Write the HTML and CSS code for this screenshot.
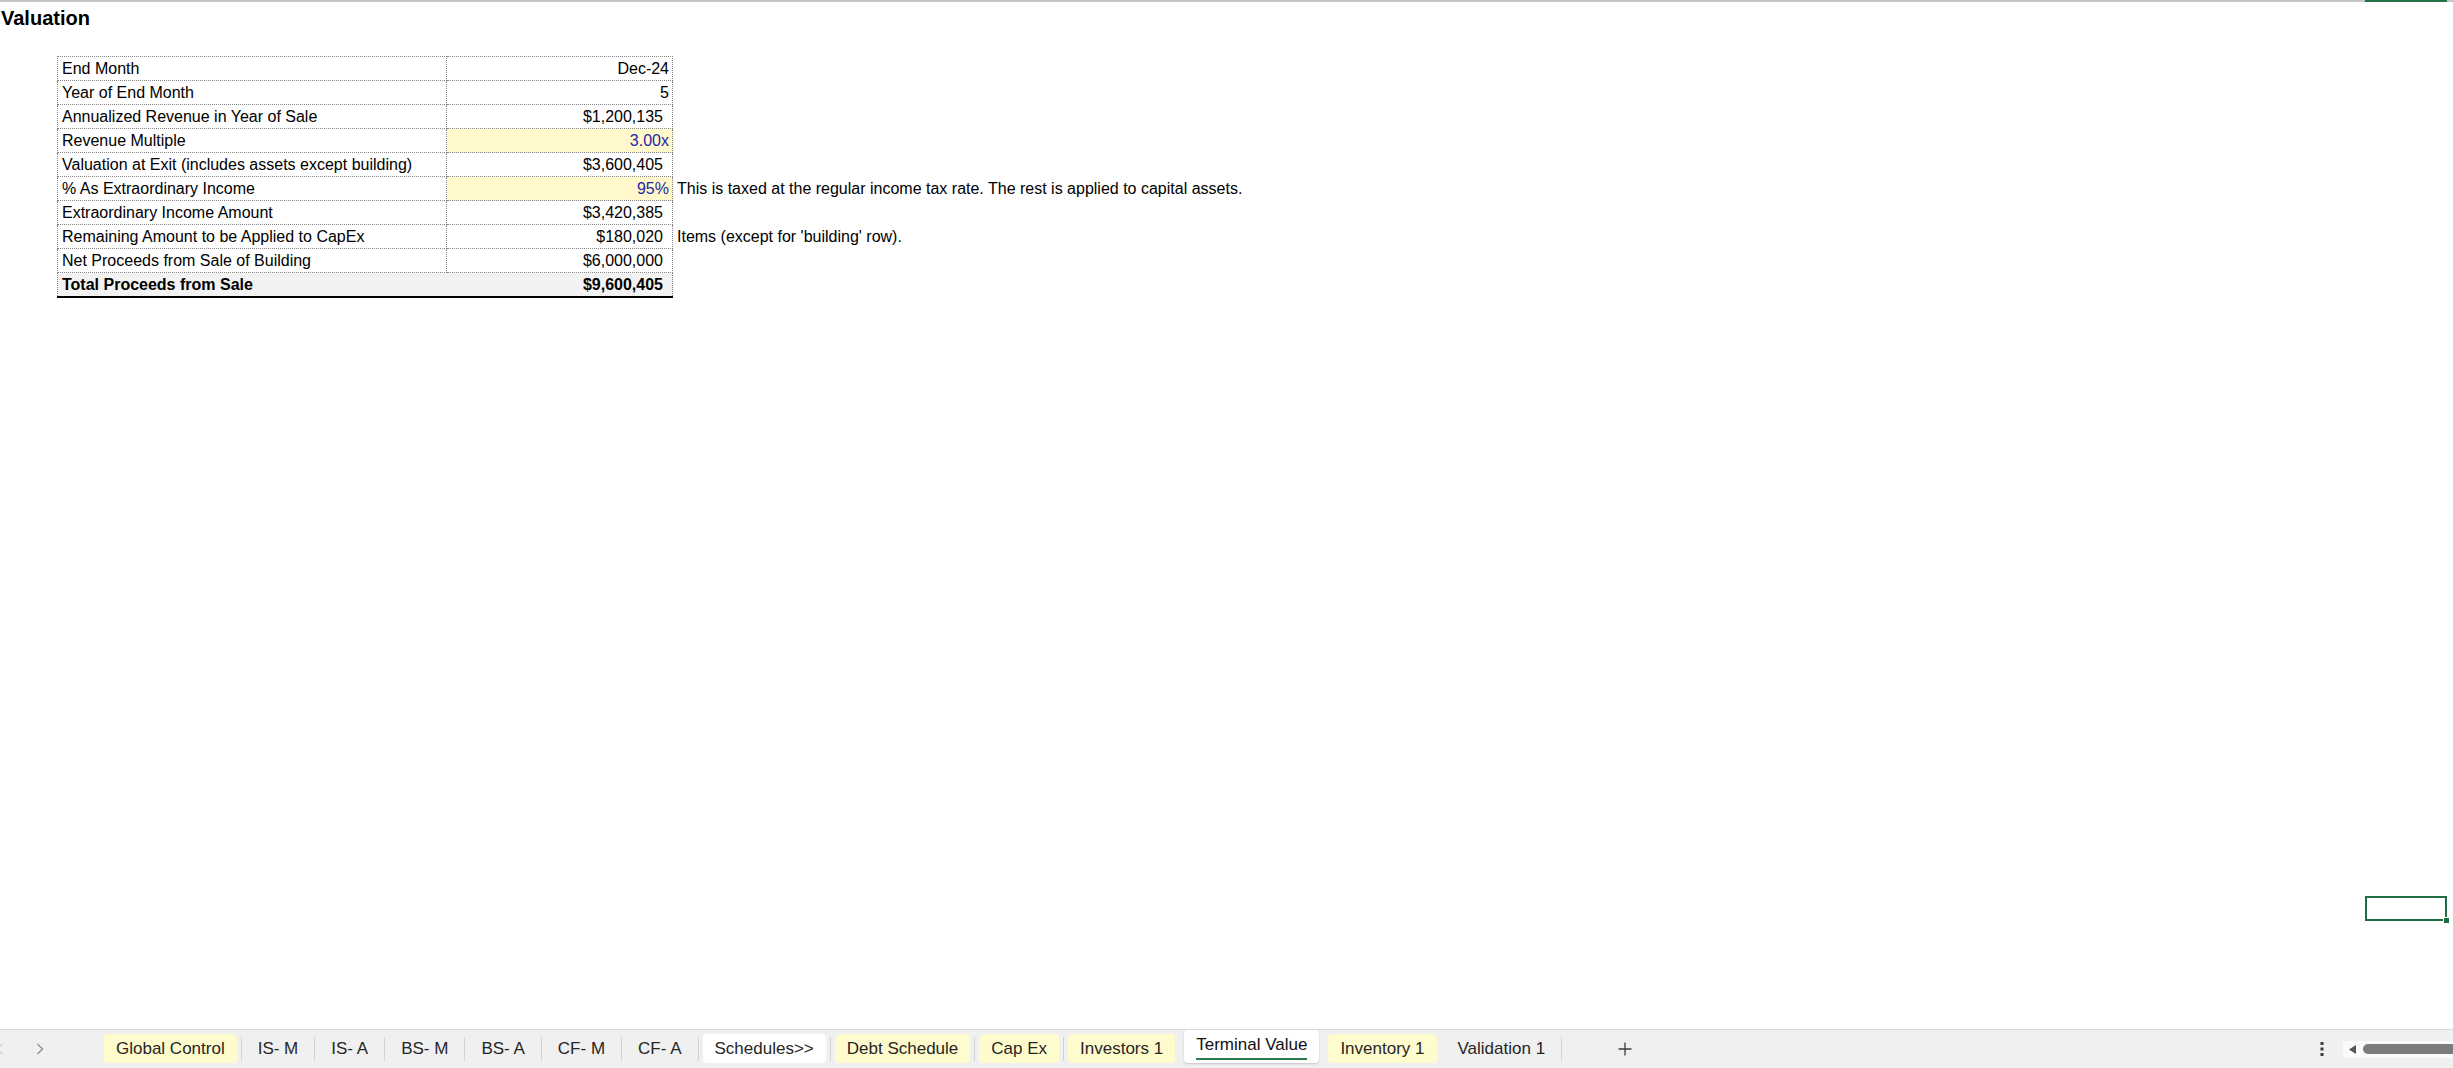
FILE: index.html
```html
<!DOCTYPE html>
<html lang="en">
<head>
    <meta charset="UTF-8">
    <meta name="viewport" content="width=device-width, initial-scale=1.0">
    <title>Terminal Value</title>
    <link rel="stylesheet" href="styles.css">
</head>
<body>
    <div class="sheet">
        <div class="col-marker"></div>
        <h1 class="title">Valuation</h1>
        <table class="valuation">
            <tr>
                <td class="label">End Month</td>
                <td class="value">Dec-24</td>
                <td class="note"></td>
            </tr>
            <tr>
                <td class="label">Year of End Month</td>
                <td class="value">5</td>
                <td class="note"></td>
            </tr>
            <tr>
                <td class="label">Annualized Revenue in Year of Sale</td>
                <td class="value acct">$1,200,135</td>
                <td class="note"></td>
            </tr>
            <tr>
                <td class="label">Revenue Multiple</td>
                <td class="value input">3.00x</td>
                <td class="note"></td>
            </tr>
            <tr>
                <td class="label">Valuation at Exit (includes assets except building)</td>
                <td class="value acct">$3,600,405</td>
                <td class="note"></td>
            </tr>
            <tr>
                <td class="label">% As Extraordinary Income</td>
                <td class="value input">95%</td>
                <td class="note">This is taxed at the regular income tax rate. The rest is applied to capital assets.</td>
            </tr>
            <tr>
                <td class="label">Extraordinary Income Amount</td>
                <td class="value acct">$3,420,385</td>
                <td class="note"></td>
            </tr>
            <tr>
                <td class="label">Remaining Amount to be Applied to CapEx</td>
                <td class="value acct">$180,020</td>
                <td class="note">Items (except for 'building' row).</td>
            </tr>
            <tr>
                <td class="label">Net Proceeds from Sale of Building</td>
                <td class="value acct">$6,000,000</td>
                <td class="note"></td>
            </tr>
            <tr class="total">
                <td class="label">Total Proceeds from Sale</td>
                <td class="value acct">$9,600,405</td>
                <td class="note"></td>
            </tr>
        </table>
        <div class="active-cell"><span class="fill-handle"></span></div>
    </div>

    <div class="tabbar">
        <div class="tab-nav">
            <svg class="chev chev-off" viewBox="0 0 8 12"><polyline points="6.5,1 1.5,6 6.5,11"/></svg>
            <svg class="chev" viewBox="0 0 8 12"><polyline points="1.5,1 6.5,6 1.5,11"/></svg>
        </div>
        <div class="tabs">
            <div class="tab tab-input">Global Control</div>
            <span class="tab-sep"></span>
            <div class="tab">IS- M</div>
            <span class="tab-sep"></span>
            <div class="tab">IS- A</div>
            <span class="tab-sep"></span>
            <div class="tab">BS- M</div>
            <span class="tab-sep"></span>
            <div class="tab">BS- A</div>
            <span class="tab-sep"></span>
            <div class="tab">CF- M</div>
            <span class="tab-sep"></span>
            <div class="tab">CF- A</div>
            <span class="tab-sep"></span>
            <div class="tab tab-white">Schedules&gt;&gt;</div>
            <span class="tab-sep"></span>
            <div class="tab tab-input">Debt Schedule</div>
            <span class="tab-sep"></span>
            <div class="tab tab-input">Cap Ex</div>
            <span class="tab-sep"></span>
            <div class="tab tab-input">Investors 1</div>
            <span class="tab-sep off"></span>
            <div class="tab tab-active"><span>Terminal Value</span></div>
            <span class="tab-sep off"></span>
            <div class="tab tab-input">Inventory 1</div>
            <span class="tab-sep off"></span>
            <div class="tab">Validation 1</div>
            <span class="tab-sep"></span>
        </div>
        <svg class="tab-add" viewBox="0 0 14 14"><path d="M7 0.5V13.5M0.5 7H13.5"/></svg>
        <div class="tab-tools">
            <svg class="more-dots" viewBox="0 0 4 16"><rect x="0.5" y="1" width="3" height="3"/><rect x="0.5" y="6.5" width="3" height="3"/><rect x="0.5" y="12" width="3" height="3"/></svg>
            <div class="hscroll">
                <svg class="hscroll-arrow" viewBox="0 0 7 9"><polygon points="7,0 7,9 0,4.5"/></svg>
                <div class="hscroll-thumb"></div>
            </div>
        </div>
    </div>
</body>
</html>
```

FILE: styles.css
```css
body {
    margin: 0;
    overflow: hidden;
    background: #fff;
    color: #000;
    font-family: "Liberation Sans", Arial, sans-serif;
}
.sheet {
    position: relative;
    height: 1029px;
    box-sizing: border-box;
    border-top: 2px solid #c6c6c6;
}
.col-marker {
    position: absolute;
    left: 2365px;
    top: -2px;
    width: 82px;
    height: 2px;
    background: #217346;
}
.title {
    margin: 0;
    padding: 4px 0 0 1px;
    font-size: 20px;
    line-height: 24px;
    font-weight: bold;
}
.valuation {
    margin: 26px 0 0 57px;
    border-collapse: collapse;
    font-size: 16px;
}
.valuation td {
    height: 23px;
    padding: 0 4px;
    line-height: 23px;
    white-space: nowrap;
}
.label, .value {
    border: 1px dotted #858585;
}
.label {
    width: 380px;
}
.value {
    width: 218px;
    text-align: right;
    padding-right: 3px !important;
}
.value.acct {
    width: 212px;
    padding-right: 9px !important;
}
.value.input {
    background: #fff9cc;
    color: #2626a8;
}
.note {
    padding-left: 4px;
}
.total .label, .total .value {
    background: #f2f2f2;
    font-weight: bold;
    border-bottom: 2px solid #000;
}
.total .label {
    border-right-style: hidden;
}
.active-cell {
    position: absolute;
    left: 2365px;
    top: 894px;
    width: 82px;
    height: 25px;
    box-sizing: border-box;
    border: 2px solid #1f6e43;
}
.fill-handle {
    position: absolute;
    right: -5px;
    bottom: -5px;
    width: 5px;
    height: 5px;
    background: #1f6e43;
    border: 1px solid #fff;
}

.tabbar {
    height: 39px;
    box-sizing: border-box;
    border-top: 1px solid #dadada;
    background: #f0f0f0;
    display: flex;
    align-items: center;
    font-size: 17px;
    color: #262626;
}
.tab-nav {
    width: 100px;
    flex: none;
    display: flex;
    align-items: center;
}
.chev {
    width: 8px;
    height: 12px;
    fill: none;
    stroke: #8c8c8c;
    stroke-width: 1.3;
}
.chev-off {
    margin-left: -4px;
    margin-right: 32px;
    stroke: #cdcdcd;
}
.tabs {
    display: flex;
    align-items: center;
    height: 100%;
}
.tab {
    align-self: flex-end;
    margin: 0 4px 5px;
    padding: 0 12px;
    height: 29px;
    line-height: 29px;
    border-radius: 4px;
    white-space: nowrap;
}
.tab-input {
    background: #fefbcd;
}
.tab-white {
    background: #fff;
}
.tab-active {
    height: 33px;
    line-height: normal;
    background: #fff;
    color: #111;
    box-shadow: 0 1px 2px rgba(0, 0, 0, 0.18);
}
.tab-active span {
    display: block;
    margin-top: 2px;
    height: 26px;
    line-height: 26px;
    border-bottom: 2px solid #2b7a4b;
}
.tab-sep {
    width: 1px;
    height: 24px;
    background: #d3d3d3;
}
.tab-sep.off {
    background: transparent;
}
.tab-add {
    margin-left: 56px;
    width: 14px;
    height: 14px;
    fill: none;
    stroke: #3c3c3c;
    stroke-width: 1.3;
}
.tab-tools {
    margin-left: auto;
    display: flex;
    align-items: center;
}
.more-dots {
    width: 4px;
    height: 16px;
    fill: #3a3a3a;
}
.hscroll {
    margin-left: 19px;
    width: 110px;
    height: 17px;
    background: #fafafa;
    display: flex;
    align-items: center;
}
.hscroll-arrow {
    margin-left: 6px;
    width: 7px;
    height: 9px;
    fill: #555;
}
.hscroll-thumb {
    margin-left: 7px;
    flex: 1;
    height: 10px;
    background: #7c7c7c;
    border-radius: 5px 0 0 5px;
}
```
